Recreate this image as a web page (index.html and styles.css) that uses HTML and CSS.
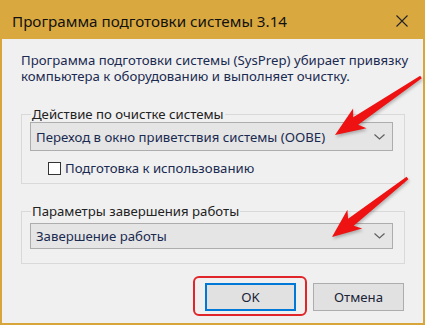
FILE: index.html
```html
<!DOCTYPE html>
<html>
<head>
<meta charset="utf-8">
<link rel="stylesheet" href="styles.css">
</head>
<body>
<div class="window">
  <div class="titlebar">
    <span class="title">Программа подготовки системы 3.14</span>
    <svg class="close" width="12" height="12" viewBox="0 0 12 12"><path d="M0.5 0.5L11.5 11.5M11.5 0.5L0.5 11.5"/></svg>
  </div>
  <div class="content">
    <p class="intro">Программа подготовки системы (SysPrep) убирает привязку<br>компьютера к оборудованию и выполняет очистку.</p>

    <fieldset class="group action">
      <legend>Действие по очистке системы</legend>
      <div class="combo tall">
        <span>Переход в окно приветствия системы (OOBE)</span>
        <svg class="chevron" width="11" height="6" viewBox="0 0 11 6"><path d="M0.5 0.5L5.5 5L10.5 0.5"/></svg>
      </div>
      <label class="check"><span class="box"></span>Подготовка к использованию</label>
    </fieldset>

    <fieldset class="group shutdown">
      <legend>Параметры завершения работы</legend>
      <div class="combo">
        <span>Завершение работы</span>
        <svg class="chevron" width="11" height="6" viewBox="0 0 11 6"><path d="M0.5 0.5L5.5 5L10.5 0.5"/></svg>
      </div>
    </fieldset>

    <div class="buttons">
      <span class="mark"><button class="btn ok">OK</button></span>
      <button class="btn">Отмена</button>
    </div>
  </div>

  <!-- красные стрелки-пометки поверх окна -->
  <svg class="arrows" width="425" height="325" viewBox="0 0 425 325">
    <polygon points="335,135 366.5,128.2 358.2,124.8 421.8,78.2 420.2,75.8 353.2,117.3 353.1,108.4"/>
    <polygon points="332,237 362.2,228.5 353.7,225.7 408.4,179.2 406.6,176.8 348.1,218.7 347.4,209.7"/>
  </svg>
</div>
</body>
</html>
```

FILE: styles.css
```css
html, body {
  margin: 0;
  padding: 0;
}

body {
  font-family: "Noto Sans", "Liberation Sans", sans-serif;
  font-size: 13.2px;
  color: #1c2438;
}

.window {
  position: relative;
  width: 425px;
  height: 325px;
  display: flex;
  flex-direction: column;
  overflow: hidden;
}

.titlebar {
  height: 39px;
  flex: none;
  background: #d9a940;
  display: flex;
  align-items: center;
  padding: 0 17px 0 12px;
  box-sizing: border-box;
}

.title {
  flex: 1;
  font-size: 15.2px;
  color: #111;
  padding-top: 2px;
}

.close {
  margin-top: 2px;
}

.close path {
  stroke: #222;
  stroke-width: 1.1;
  fill: none;
}

.content {
  flex: 1;
  background: #f0f0f0;
  border: 2px solid #d7a53a;
  border-top: 0;
  padding: 0 18px 0 19px;
}

.intro {
  margin: 13px 0 0 0;
  line-height: 16px;
  white-space: nowrap;
  color: #1a2a50;
}

.group {
  margin: 0;
  border: 1px solid #d9d9d9;
  padding: 0 11px 0 8px;
}

.group legend {
  margin-left: 1px;
  padding: 0 1px;
  line-height: 15px;
  color: #222;
}

.action {
  margin-top: 23px;
  padding-bottom: 7px;
}

.shutdown {
  margin-top: 20px;
  padding-top: 4px;
  padding-bottom: 14px;
}

.combo {
  height: 26px;
  box-sizing: border-box;
  border: 1px solid #adadad;
  background: #e5e5e5;
  display: flex;
  align-items: center;
  justify-content: space-between;
  padding: 0 7px 0 5px;
  color: #1a2a50;
}

.combo.tall {
  height: 29px;
}

.chevron path {
  stroke: #606060;
  stroke-width: 1.2;
  fill: none;
}

.check {
  display: flex;
  align-items: center;
  margin: 10px 0 0 18px;
  line-height: 15px;
  color: #1a2a50;
}

.check .box {
  width: 13px;
  height: 13px;
  box-sizing: border-box;
  border: 1px solid #333;
  background: #fff;
  margin-right: 4px;
}

.buttons {
  display: flex;
  justify-content: flex-end;
  gap: 17px;
  margin: 19px 1px 0 0;
}

.btn {
  width: 91px;
  height: 28px;
  box-sizing: border-box;
  border: 1px solid #adadad;
  background: #e1e1e1;
  font-family: inherit;
  font-size: 13.2px;
  color: #1c2438;
  padding: 0;
}

.btn.ok {
  border: 2px solid #0078d7;
  display: block;
}

.mark {
  position: relative;
}

/* красная рамка вокруг кнопки OK */
.mark::after {
  content: "";
  position: absolute;
  top: -7px;
  bottom: -5px;
  left: -12px;
  right: -11px;
  border: 2px solid #e0262a;
  border-radius: 6px;
}

.arrows {
  position: absolute;
  left: 0;
  top: 0;
  pointer-events: none;
}

.arrows polygon {
  fill: #ee1212;
  filter: drop-shadow(1px 2px 1.5px rgba(0, 0, 0, 0.25));
}
```
